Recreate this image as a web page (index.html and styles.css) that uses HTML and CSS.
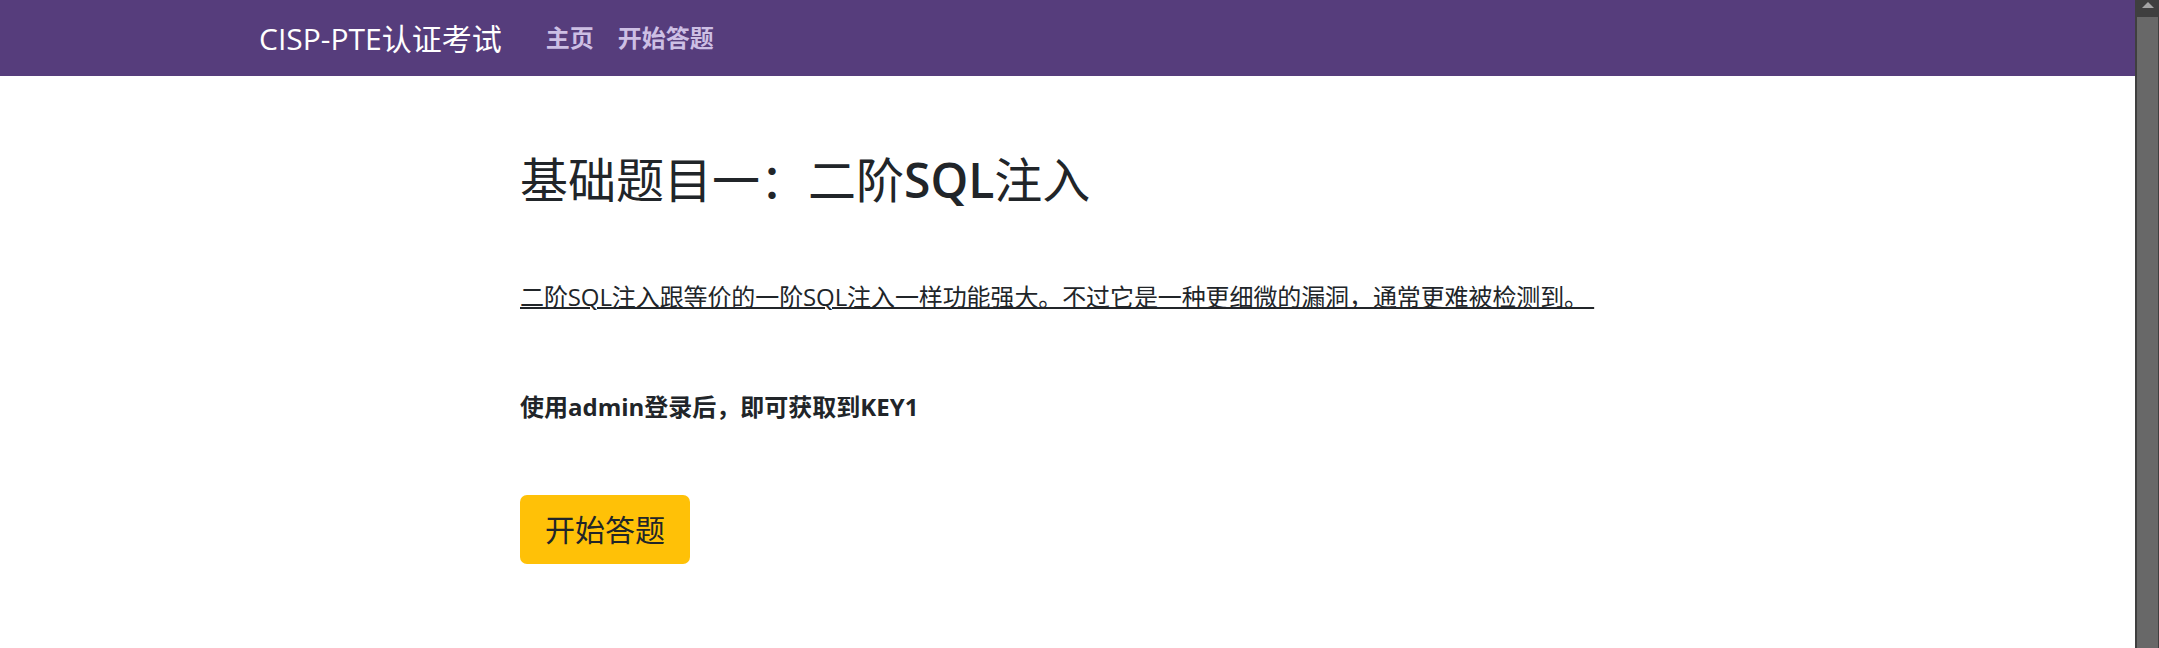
FILE: index.html
```html
<!DOCTYPE html>
<html lang="zh-CN">
<head>
<meta charset="utf-8">
<title>CISP-PTE认证考试</title>
<link rel="stylesheet" href="styles.css">
</head>
<body>
<div class="page">
  <nav class="navbar">
    <a class="brand" href="#">CISP-PTE认证考试</a>
    <ul class="nav">
      <li><a class="nav-link" href="#">主页</a></li>
      <li><a class="nav-link" href="#">开始答题</a></li>
    </ul>
  </nav>
  <main class="content">
    <h1 class="title">基础题目一：二阶<span class="latin">SQL</span>注入</h1>
    <p class="desc"><u>二阶SQL注入跟等价的一阶SQL注入一样功能强大。不过它是一种更细微的漏洞，通常更难被检测到。&nbsp;</u></p>
    <p class="task"><b>使用admin登录后，即可获取到KEY1</b></p>
    <div class="actions"><a class="btn" href="#">开始答题</a></div>
  </main>
</div>
<div class="scrollbar">
  <div class="sb-up"><span class="sb-arrow"></span></div>
  <div class="sb-thumb"></div>
</div>
</body>
</html>
```

FILE: styles.css
```css
html, body {
  margin: 0;
  padding: 0;
  background: #ffffff;
}
body {
  font-family: "Open Sans", "Noto Sans CJK SC", sans-serif;
  font-size: 24px;
  line-height: 1.5;
  color: #212529;
}
.page {
  margin-right: 24px;
}
.navbar {
  height: 76px;
  background: #563d7c;
  display: flex;
  align-items: center;
  padding-left: 259px;
}
.brand {
  color: #ffffff;
  text-decoration: none;
  font-size: 30px;
  line-height: 1.5;
  margin-right: 32px;
}
.nav {
  list-style: none;
  margin: 0;
  padding: 0;
  display: flex;
}
.nav-link {
  display: block;
  padding: 0 12px;
  color: #cdbfe4;
  font-weight: 700;
  text-decoration: none;
  font-size: 24px;
}
.content {
  padding-left: 520px;
  padding-top: 75px;
  display: flex;
  flex-direction: column;
}
.title {
  margin: 0;
  font-size: 48px;
  font-weight: 400;
  line-height: 1.2;
}
.title .latin {
  font-weight: 600;
}
.desc {
  margin: 70px 0 0;
  letter-spacing: -0.1px;
}
.desc u {
  text-decoration-thickness: 2px;
}
.task {
  margin: 74px 0 0;
}
.actions {
  margin-top: 70px;
}
.btn {
  display: inline-block;
  background: #ffc107;
  color: #212529;
  text-decoration: none;
  font-size: 30px;
  line-height: 1.5;
  padding: 12px 25px;
  border-radius: 7px;
}
.scrollbar {
  position: fixed;
  top: 0;
  right: 0;
  bottom: 0;
  width: 24px;
  background: #3f3f3f;
  display: flex;
  flex-direction: column;
}
.sb-up {
  height: 17px;
  display: flex;
  justify-content: center;
  padding-top: 2px;
  box-sizing: border-box;
}
.sb-arrow {
  width: 0;
  height: 0;
  border-left: 6px solid transparent;
  border-right: 6px solid transparent;
  border-bottom: 6px solid #a5a5a5;
  margin-left: 2px;
}
.sb-thumb {
  flex: 1;
  margin: 0 1px 0 2px;
  background: #686868;
}
```
